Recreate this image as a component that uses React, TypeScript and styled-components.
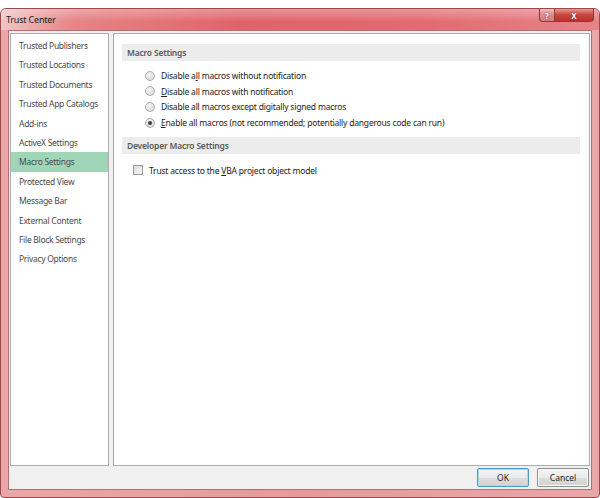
import React from 'react'
import styled, { createGlobalStyle } from 'styled-components'

const GlobalStyle = createGlobalStyle`
  html, body {
    margin: 0;
    padding: 0;
    background: #ffffff;
  }
  body {
    font-family: 'Noto Sans', 'Open Sans', sans-serif;
  }
`

const Screen = styled.div`
  width: 600px;
  height: 498px;
  padding-top: 8px;
  box-sizing: border-box;
  overflow: hidden;
`

const Window = styled.div`
  height: 490px;
  box-sizing: border-box;
  display: flex;
  flex-direction: column;
  border: 1px solid #9a4a4c;
  border-radius: 6px 6px 4px 4px;
  background: linear-gradient(to right, #eba7a8 0%, #e59a9c 50%, #e8a8aa 100%);
`

const TitleBar = styled.div`
  height: 21px;
  flex: none;
  display: flex;
  align-items: flex-start;
  justify-content: space-between;
  padding-left: 5px;
  border-radius: 5px 5px 0 0;
  background:
    linear-gradient(to bottom, rgba(255, 255, 255, 0.3), rgba(255, 255, 255, 0) 60%),
    linear-gradient(to right, #f3c6c6 0%, #e78486 12%, #e0636a 40%, #e26a70 70%, #e68488 100%);
`

const Title = styled.span`
  font-size: 9px;
  line-height: 21px;
  color: #1e1e1e;
  letter-spacing: -0.2px;
`

const Caption = styled.div`
  display: flex;
  margin-right: 5px;
`

const CaptionButton = styled.div<{ $close?: boolean }>`
  width: ${({ $close }) => ($close ? '38px' : '14px')};
  height: 12px;
  display: flex;
  align-items: center;
  justify-content: center;
  font-size: 8px;
  font-weight: bold;
  color: #ffffff;
  border: 1px solid #8a3a3c;
  border-top: 0;
  border-left-width: ${({ $close }) => ($close ? '0' : '1px')};
  border-radius: ${({ $close }) => ($close ? '0 0 4px 0' : '0 0 0 4px')};
  background: ${({ $close }) =>
    $close
      ? 'linear-gradient(to bottom, #e89a90, #c7453c 50%, #b8352e)'
      : 'linear-gradient(to bottom, #f1b8b8, #e08a8c 50%, #d77c7e)'};
  text-shadow: 0 0 2px #602020;
`

const Client = styled.div`
  flex: 1;
  margin: 0 7px;
  display: flex;
  flex-direction: column;
  background: #f0f0f0;
  border: 1px solid #b27072;
  padding: 2px 1px 0 1px;
  box-sizing: border-box;
`

const Body = styled.div`
  flex: 1;
  display: flex;
  gap: 4px;
`

const NavList = styled.div`
  width: 99px;
  background: #ffffff;
  border: 1px solid #acacac;
  box-sizing: border-box;
  padding-top: 2px;
  display: flex;
  flex-direction: column;
`

const NavItem = styled.div<{ $active?: boolean }>`
  height: 19.4px;
  line-height: 19.4px;
  padding-left: 8px;
  font-size: 8.5px;
  letter-spacing: -0.3px;
  white-space: nowrap;
  color: #4a4a4a;
  background: ${({ $active }) => ($active ? '#9fd6b8' : 'transparent')};
`

const Panel = styled.div`
  flex: 1;
  background: #ffffff;
  border: 1px solid #acacac;
  box-sizing: border-box;
  padding: 10px 9px 0 8px;
`

const SectionHead = styled.div`
  height: 17px;
  line-height: 17px;
  padding-left: 5px;
  background: #ececec;
  font-size: 8.5px;
  letter-spacing: -0.2px;
  font-weight: 600;
  color: #595959;
`

const OptionGroup = styled.div`
  padding: 7px 0 7px 23px;
  display: flex;
  flex-direction: column;
`

const OptionRow = styled.label`
  height: 15.6px;
  display: flex;
  align-items: center;
  gap: 6px;
  font-size: 8.5px;
  letter-spacing: -0.2px;
  white-space: nowrap;
  color: #222222;
`

const Radio = styled.span<{ $checked?: boolean }>`
  width: 8px;
  height: 8px;
  border-radius: 50%;
  border: 1px solid #b0b0b0;
  background: radial-gradient(circle at 40% 35%, #f4f4f4 0%, #d2d2d2 100%);
  display: flex;
  align-items: center;
  justify-content: center;
  &::after {
    content: '';
    display: ${({ $checked }) => ($checked ? 'block' : 'none')};
    width: 4px;
    height: 4px;
    border-radius: 50%;
    background: #34404e;
  }
`

const CheckGroup = styled.div`
  padding: 8px 0 0 11px;
`

const Checkbox = styled.span`
  width: 8px;
  height: 8px;
  border: 1px solid #9c9c9c;
  background: linear-gradient(135deg, #dcdcdc, #f6f6f6);
`

const Key = styled.u`
  text-decoration-thickness: 1px;
  text-underline-offset: 1px;
`

const Footer = styled.div`
  height: 23px;
  flex: none;
  display: flex;
  justify-content: flex-end;
  align-items: center;
  gap: 8px;
  padding-right: 1px;
`

const DialogButton = styled.button<{ $default?: boolean }>`
  width: 52px;
  height: 19px;
  font-family: inherit;
  font-size: 8.5px;
  color: #1e1e1e;
  border-radius: 2px;
  border: 1px solid ${({ $default }) => ($default ? '#4d9bc3' : '#8e8e8e')};
  box-shadow: ${({ $default }) => ($default ? 'inset 0 0 0 1px #a9dcf0' : 'inset 0 0 0 1px #fafafa')};
  background: linear-gradient(to bottom, #f4f4f4 0%, #ebebeb 50%, #dddddd 51%, #d2d2d2 100%);
  padding: 0;
`

const BottomFrame = styled.div`
  height: 7px;
  flex: none;
`

const navItems = [
  'Trusted Publishers',
  'Trusted Locations',
  'Trusted Documents',
  'Trusted App Catalogs',
  'Add-ins',
  'ActiveX Settings',
  'Macro Settings',
  'Protected View',
  'Message Bar',
  'External Content',
  'File Block Settings',
  'Privacy Options',
]

const App = (): React.ReactElement => (
  <Screen>
    <GlobalStyle />
    <Window>
      <TitleBar>
        <Title>Trust Center</Title>
        <Caption>
          <CaptionButton>?</CaptionButton>
          <CaptionButton $close>X</CaptionButton>
        </Caption>
      </TitleBar>
      <Client>
        <Body>
          <NavList>
            {navItems.map((item) => (
              <NavItem key={item} $active={item === 'Macro Settings'}>
                {item}
              </NavItem>
            ))}
          </NavList>
          <Panel>
            <SectionHead>Macro Settings</SectionHead>
            <OptionGroup>
              <OptionRow>
                <Radio />
                <span>
                  Disable a<Key>l</Key>l macros without notification
                </span>
              </OptionRow>
              <OptionRow>
                <Radio />
                <span>
                  <Key>D</Key>isable all macros with notification
                </span>
              </OptionRow>
              <OptionRow>
                <Radio />
                <span>Disable all macros except digitally signed macros</span>
              </OptionRow>
              <OptionRow>
                <Radio $checked />
                <span>
                  <Key>E</Key>nable all macros (not recommended; potentially dangerous code can run)
                </span>
              </OptionRow>
            </OptionGroup>
            <SectionHead>Developer Macro Settings</SectionHead>
            <CheckGroup>
              <OptionRow>
                <Checkbox />
                <span>
                  Trust access to the <Key>V</Key>BA project object model
                </span>
              </OptionRow>
            </CheckGroup>
          </Panel>
        </Body>
        <Footer>
          <DialogButton $default>OK</DialogButton>
          <DialogButton>Cancel</DialogButton>
        </Footer>
      </Client>
      <BottomFrame />
    </Window>
  </Screen>
)

export default App
